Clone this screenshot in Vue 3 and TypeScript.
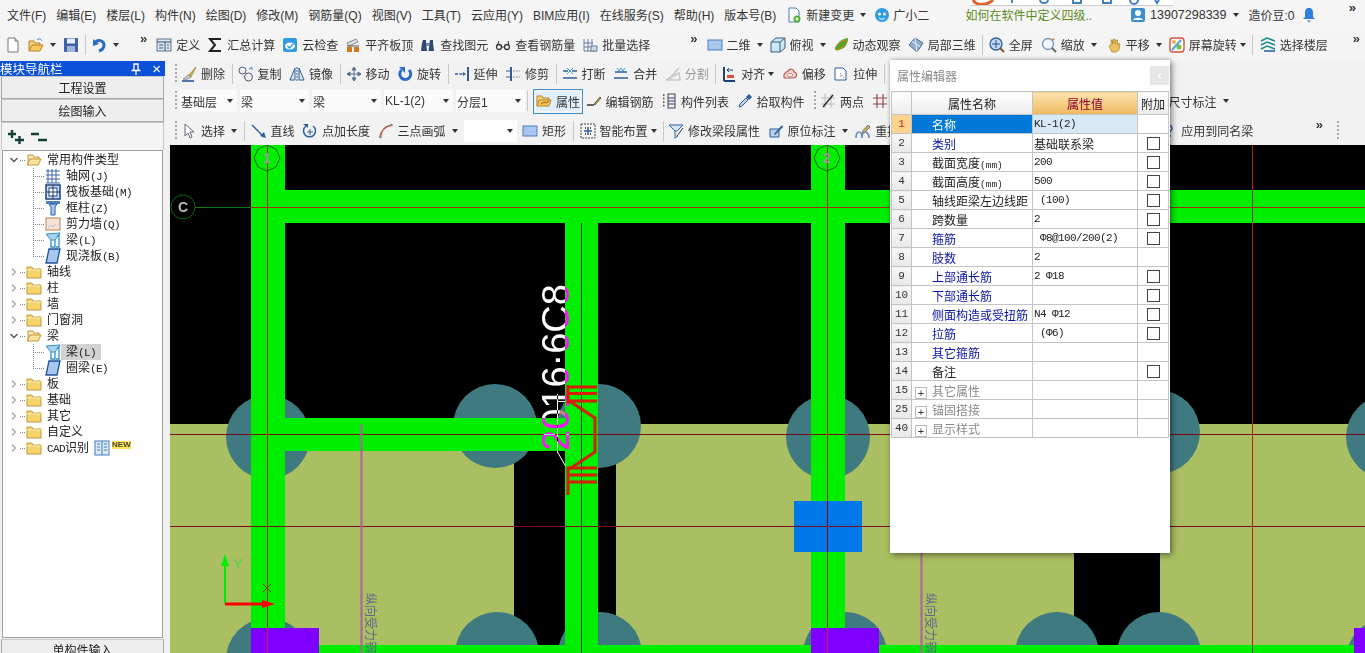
<template>
  <div class="app">
    <header class="menubar">
      <span v-for="m in menus" :key="m" class="menu">{{ m }}</span>
      <span class="menu-tool">
        <svg class="ico" viewBox="0 0 16 16" v-html="icons.change"></svg>新建变更<i class="caret"></i>
      </span>
      <span class="menu-tool robot">
        <svg class="ico" viewBox="0 0 16 16" v-html="icons.robot"></svg>广小二
      </span>
      <span class="tip">如何在软件中定义四级..</span>
      <span class="menu-tool account">
        <svg class="ico" viewBox="0 0 16 16" v-html="icons.user"></svg>13907298339<i class="caret"></i>
      </span>
      <span class="beans">造价豆:0</span>
      <svg class="ico bell" viewBox="0 0 16 16" v-html="icons.bell"></svg>
      <span class="more more-menu">»</span>
      <div class="popup">
        <svg width="203" height="6" viewBox="0 0 203 6">
          <path d="M3 0c3 6 14 6 20 0" fill="none" stroke="#e2602a" stroke-width="3" />
          <path d="M42 0v3M70 0a4 3 0 0 0 8 0M103 0v3h8V0M133 0v3h8V0M160 0a4 4 0 0 0 8 0M185 0l2 3 2-3" fill="none" stroke="#3f7fc0" stroke-width="2" />
        </svg>
      </div>
    </header>

    <aside class="nav">
      <div class="nav-title">
        <span>模块导航栏</span>
        <svg class="pin" viewBox="0 0 10 12"><path d="M3 1h4v5l1.500 1.500h-7L3 6zM5 8v4" fill="none" stroke="#fff" stroke-width="1.300" /></svg>
        <span class="nav-close">×</span>
      </div>
      <button class="nav-btn">工程设置</button>
      <button class="nav-btn">绘图输入</button>
      <div class="nav-tools">
        <svg class="tree-tool" viewBox="0 0 16 14"><path d="M0 4h8M4 0v8M7 10h9M11.500 6v8" stroke="#14403a" stroke-width="2.400" fill="none" /></svg>
        <svg class="tree-tool" viewBox="0 0 16 14"><path d="M0 4h8M7 10h9" stroke="#14403a" stroke-width="2.400" fill="none" /></svg>
      </div>
      <div class="tree">
        <div v-for="(n, i) in tree" :key="i" class="tree-row" :class="n.child ? 'tree-child' : 'tree-top'">
          <template v-if="n.child">
            <span class="stem" :class="{ last: n.last }"></span>
          </template>
          <template v-else>
            <svg class="chev" viewBox="0 0 8 8">
              <path :d="n.open ? 'M0.500 2l3.500 3.500L7.500 2' : 'M2 0.500l3.500 3.500L2 7.500'" fill="none" :stroke="n.open ? '#555' : '#aaa'" stroke-width="1.400" />
            </svg>
            <span class="link"></span>
          </template>
          <svg class="ico" viewBox="0 0 16 16" v-html="icons[n.icon]"></svg>
          <span class="tree-label" :class="{ picked: n.picked }"><span v-if="n.pre" class="mono">{{ n.pre }}</span>{{ n.label }}<span v-if="n.key" class="mono">{{ n.key }}</span></span>
          <template v-if="n.cad">
            <svg class="ico cad-ico" viewBox="0 0 16 16" v-html="icons.cad"></svg>
            <span class="new-tag">NEW</span>
          </template>
        </div>
      </div>
      <button class="nav-btn nav-single">单构件输入</button>
    </aside>

    <div v-for="row in toolRows" :key="row.cls" class="toolrow" :class="row.cls">
      <template v-for="(t, i) in row.items" :key="i">
        <i v-if="t.grip" class="grip"></i>
        <i v-else-if="t.sep" class="sep"></i>
        <span v-else-if="t.more" class="more" :style="t.ml ? { marginLeft: t.ml + 'px' } : undefined">»</span>
        <span v-else-if="t.combo !== undefined" class="combo" :class="{ narrow: t.narrow, blank: t.blank }">
          {{ t.combo }}<i class="caret"></i>
        </span>
        <span v-else class="tool" :class="{ active: t.active, off: t.off, push: t.push, tight: t.tight }" :style="t.ml ? { marginLeft: t.ml + 'px' } : undefined">
          <svg v-if="t.icon" class="ico" viewBox="0 0 16 16" v-html="icons[t.icon]"></svg>
          <span v-if="t.label">{{ t.label }}</span>
          <i v-if="t.arrow" class="caret"></i>
        </span>
      </template>
    </div>

    <svg class="canvas" viewBox="170 145 1195 508" width="1195" height="508">
      <rect x="170" y="145" width="1195" height="508" fill="#000" />
      <rect x="170" y="424" width="1195" height="229" fill="#a9bf62" />
      <rect x="514" y="424" width="102" height="229" fill="#000" />
      <rect x="1074" y="424" width="86" height="229" fill="#000" />

      <circle v-for="c in piles" :key="c[0] + '-' + c[1]" :cx="c[0]" :cy="c[1]" r="42" fill="#3f7a80" />

      <g fill="#00ee00">
        <rect x="251" y="145" width="34" height="508" />
        <rect x="565" y="223" width="33" height="430" />
        <rect x="811" y="145" width="34" height="508" />
        <rect x="251" y="190" width="1114" height="33" />
        <rect x="285" y="418" width="280" height="33" />
        <rect x="251" y="645" width="1114" height="8" />
      </g>

      <g stroke-width="1" fill="none">
        <path d="M195 207.500h56" stroke="#0b7a0b" />
        <path d="M251 207.500h1114" stroke="#a82c08" />
        <path d="M267.500 145v483M827.500 145v508M1252.500 145v508" stroke="#a82c08" />
        <path d="M581.500 223v430" stroke="#0a2a0a" />
        <path d="M170 434.500h1195M170 526.500h1195" stroke="#7d0a14" />
        <path d="M361.500 424v229M921.500 424v229" stroke="#b060a0" stroke-width="2" />
        <circle cx="183" cy="207" r="12" stroke="#0a6a0a" />
        <path d="M280 158l-4 9-9 4-9-4-4-9 4-9 9-4 9 4z" stroke="#0b6a0b" />
        <path d="M840 158l-4 9-9 4-9-4-4-9 4-9 9-4 9 4z" stroke="#0b6a0b" />
      </g>
      <text x="183" y="212" class="bubble">C</text>
      <text x="267" y="163" class="bubble dim">1</text>
      <text x="827" y="163" class="bubble dim">2</text>

      <rect x="794" y="501" width="68" height="51" fill="#0078e8" />
      <path d="M827.500 501v51M794 526.500h68" stroke="#7d0a14" />
      <g fill="#7f00ff">
        <rect x="251" y="628" width="68" height="25" />
        <rect x="811" y="628" width="68" height="25" />
        <rect x="1354" y="628" width="11" height="25" />
      </g>
      <path d="M267.500 628v25M827.500 628v25" stroke="#e0104a" />

      <text class="longbar" transform="translate(366 593) rotate(90)">纵向受力钢</text>
      <text class="longbar" transform="translate(926 593) rotate(90)">纵向受力钢</text>

      <path d="M557.500 394v58l8 14" stroke="#fff" fill="none" />
      <path d="M557 401.500h8" stroke="#fff" />
      <text class="stamp" transform="translate(569 451) rotate(-90)">2016·6C8</text>

      <g fill="none" stroke="#d81e06" stroke-width="3">
        <path d="M568 385v17l3 0 24 16v34l-24 16h-3v27" />
        <path d="M568 387h29M568 393.500h29M568 401h29M568 468h29M568 475h29M568 482h29" />
      </g>

      <path d="M225 604v-40" stroke="#00ee00" stroke-width="2" />
      <path d="M225 554l-4 12h8z" fill="#00ee00" />
      <text x="233" y="569" class="axis-y">Y</text>
      <path d="M225 604h42" stroke="#f00" stroke-width="3" />
      <path d="M275 604l-13-4v8z" fill="#f00" />
      <path d="M263 584l8 8M271 584l-8 8" stroke="#8a3a00" />
    </svg>

    <div class="props">
      <div class="props-title">
        <span>属性编辑器</span>
        <span class="props-close">‹</span>
      </div>
      <table class="grid">
        <colgroup>
          <col class="c-no" /><col class="c-name" /><col class="c-val" /><col class="c-add" />
        </colgroup>
        <thead>
          <tr>
            <th class="idx"></th>
            <th>属性名称</th>
            <th class="th-val">属性值</th>
            <th>附加</th>
          </tr>
        </thead>
        <tbody>
          <tr v-for="(r, i) in props" :key="r.no">
            <td class="idx" :class="{ sel: i === 0 }">{{ r.no }}</td>
            <td class="name" :class="[r.kind, { sel: i === 0 }]">
              <span v-if="r.kind === 'group'" class="plus">+</span>{{ r.name }}<span v-if="r.unit" class="unit">{{ r.unit }}</span>
            </td>
            <td class="val" :class="{ sel: i === 0, cn: r.cn }">{{ r.val }}</td>
            <td class="add"><i v-if="r.check" class="check"></i></td>
          </tr>
        </tbody>
      </table>
    </div>
  </div>
</template>

<script setup lang="ts">
interface Tool {
  icon?: string
  label?: string
  arrow?: boolean
  tight?: boolean
  sep?: boolean
  grip?: boolean
  more?: boolean
  combo?: string
  narrow?: boolean
  blank?: boolean
  active?: boolean
  off?: boolean
  push?: boolean
  ml?: number
}

interface TreeNode {
  label: string
  icon: string
  key?: string
  pre?: string
  open?: boolean
  child?: boolean
  last?: boolean
  picked?: boolean
  cad?: boolean
}

interface PropRow {
  no: number
  name: string
  val: string
  kind: string
  unit?: string
  check?: boolean
  cn?: boolean
}

const menus = ['文件(F)', '编辑(E)', '楼层(L)', '构件(N)', '绘图(D)', '修改(M)', '钢筋量(Q)', '视图(V)', '工具(T)', '云应用(Y)', 'BIM应用(I)', '在线服务(S)', '帮助(H)', '版本号(B)']

const toolRows: { cls: string; items: Tool[] }[] = [
  {
    cls: 'row-top',
    items: [
      { icon: 'doc' }, { icon: 'open', arrow: true }, { icon: 'save' }, { sep: true }, { icon: 'undo', arrow: true },
      { more: true, ml: 14 },
      { icon: 'define', label: '定义', ml: 9 }, { icon: 'sigma', label: '汇总计算' }, { icon: 'cloud', label: '云检查' },
      { icon: 'level', label: '平齐板顶' }, { icon: 'binoc', label: '查找图元' }, { icon: 'glasses', label: '查看钢筋量' },
      { icon: 'batch', label: '批量选择' }, { more: true, ml: 33 },
      { icon: 'plane', label: '二维', arrow: true, ml: 9 }, { icon: 'cube', label: '俯视', arrow: true },
      { icon: 'orbit', label: '动态观察' }, { icon: 'local3d', label: '局部三维' }, { sep: true },
      { icon: 'full', label: '全屏', ml: 1 }, { icon: 'zoom', label: '缩放', arrow: true, ml: 1 }, { icon: 'hand', label: '平移', arrow: true, ml: 2 },
      { icon: 'spin', label: '屏幕旋转', arrow: true, tight: true }, { sep: true }, { icon: 'floors', label: '选择楼层', ml: 2 },
      { more: true, ml: 18 },
    ],
  },
  {
    cls: 'row-edit',
    items: [
      { grip: true }, { icon: 'brush', label: '删除' }, { sep: true }, { icon: 'copy', label: '复制' }, { icon: 'mirror', label: '镜像' }, { sep: true },
      { icon: 'move', label: '移动' }, { icon: 'turn', label: '旋转' }, { sep: true }, { icon: 'extend', label: '延伸' }, { icon: 'trim', label: '修剪' }, { sep: true },
      { icon: 'cut', label: '打断' }, { icon: 'join', label: '合并' }, { icon: 'split', label: '分割', off: true }, { sep: true },
      { icon: 'align', label: '对齐', arrow: true, tight: true }, { icon: 'offset', label: '偏移' }, { icon: 'stretch', label: '拉伸' }, { sep: true },
    ],
  },
  {
    cls: 'row-prop',
    items: [
      { grip: true }, { combo: '基础层', narrow: true }, { combo: '梁' }, { combo: '梁' }, { combo: 'KL-1(2)' }, { combo: '分层1' }, { sep: true },
      { icon: 'prop', label: '属性', active: true }, { icon: 'rebar', label: '编辑钢筋' }, { icon: 'list', label: '构件列表' }, { icon: 'pick', label: '拾取构件' },
      { grip: true }, { icon: 'twopt', label: '两点' }, { icon: 'para' },
      { label: '尺寸标注', arrow: true, push: true },
    ],
  },
  {
    cls: 'row-draw',
    items: [
      { grip: true }, { icon: 'cursor', label: '选择', arrow: true }, { sep: true }, { icon: 'line', label: '直线' }, { icon: 'ptlen', label: '点加长度' },
      { icon: 'arc', label: '三点画弧', arrow: true }, { combo: '', blank: true }, { icon: 'plane', label: '矩形' }, { sep: true },
      { icon: 'smart', label: '智能布置', arrow: true, tight: true }, { sep: true }, { icon: 'funnel', label: '修改梁段属性' }, { icon: 'origin', label: '原位标注', arrow: true },
      { icon: 'lift', label: '重提' },
      { icon: 'apply', label: '应用到同名梁', push: true }, { more: true, ml: 55 }, { grip: true },
    ],
  },
]

const tree: TreeNode[] = [
  { label: '常用构件类型', icon: 'fopen', open: true },
  { label: '轴网', key: '(J)', icon: 'tgrid', child: true },
  { label: '筏板基础', key: '(M)', icon: 'traft', child: true },
  { label: '框柱', key: '(Z)', icon: 'tcol', child: true },
  { label: '剪力墙', key: '(Q)', icon: 'twall', child: true },
  { label: '梁', key: '(L)', icon: 'funnel2', child: true },
  { label: '现浇板', key: '(B)', icon: 'tslab', child: true, last: true },
  { label: '轴线', icon: 'folder' },
  { label: '柱', icon: 'folder' },
  { label: '墙', icon: 'folder' },
  { label: '门窗洞', icon: 'folder' },
  { label: '梁', icon: 'fopen', open: true },
  { label: '梁', key: '(L)', icon: 'funnel2', child: true, picked: true },
  { label: '圈梁', key: '(E)', icon: 'tslab', child: true, last: true },
  { label: '板', icon: 'folder' },
  { label: '基础', icon: 'folder' },
  { label: '其它', icon: 'folder' },
  { label: '自定义', icon: 'folder' },
  { label: '识别', pre: 'CAD', icon: 'folder', cad: true },
]

const props: PropRow[] = [
  { no: 1, name: '名称', val: 'KL-1(2)', kind: 'blue' },
  { no: 2, name: '类别', val: '基础联系梁', kind: 'blue', check: true, cn: true },
  { no: 3, name: '截面宽度', unit: '(mm)', val: '200', kind: 'plain', check: true },
  { no: 4, name: '截面高度', unit: '(mm)', val: '500', kind: 'plain', check: true },
  { no: 5, name: '轴线距梁左边线距', val: ' (100)', kind: 'plain', check: true },
  { no: 6, name: '跨数量', val: '2', kind: 'plain', check: true },
  { no: 7, name: '箍筋', val: ' Φ8@100/200(2)', kind: 'blue', check: true },
  { no: 8, name: '肢数', val: '2', kind: 'blue' },
  { no: 9, name: '上部通长筋', val: '2 Φ18', kind: 'blue', check: true },
  { no: 10, name: '下部通长筋', val: '', kind: 'blue', check: true },
  { no: 11, name: '侧面构造或受扭筋', val: 'N4 Φ12', kind: 'blue', check: true },
  { no: 12, name: '拉筋', val: ' (Φ6)', kind: 'blue', check: true },
  { no: 13, name: '其它箍筋', val: '', kind: 'blue' },
  { no: 14, name: '备注', val: '', kind: 'plain', check: true },
  { no: 15, name: '其它属性', val: '', kind: 'group' },
  { no: 25, name: '锚固搭接', val: '', kind: 'group' },
  { no: 40, name: '显示样式', val: '', kind: 'group' },
]

const piles = [
  [268, 437], [495, 426], [599, 426], [828, 437], [1158, 432], [1388, 437],
  [268, 660], [497, 654], [600, 654], [845, 654], [1057, 654], [1159, 654], [1388, 660],
]

const icons: Record<string, string> = {
  change: '<path d="M3 1h7l3 3v11H3z" fill="#fff" stroke="#4a7fb5"/><circle cx="11" cy="12" r="3.500" fill="#4fae2e"/><path d="M9 12h4M11 10v4" stroke="#fff"/>',
  robot: '<circle cx="8" cy="8" r="7" fill="#2f9be0"/><circle cx="5.500" cy="7" r="1.500" fill="#fff"/><circle cx="10.500" cy="7" r="1.500" fill="#fff"/><path d="M5 11c2 1.500 4 1.500 6 0" stroke="#fff" fill="none"/>',
  user: '<rect x="1" y="1" width="14" height="14" rx="2" fill="#3d8fd0"/><circle cx="8" cy="6" r="3" fill="#fff"/><path d="M3 13c1-3 9-3 10 0z" fill="#fff"/>',
  bell: '<path d="M8 1c3 0 4 2 4 5v4l2 2H2l2-2V6c0-3 1-5 4-5z" fill="#2f7fe0"/><path d="M6 13.500h4l-2 2z" fill="#2f7fe0"/>',
  doc: '<path d="M3 1h7l3 3v11H3z" fill="#fff" stroke="#777"/><path d="M10 1v3h3" fill="#ddd" stroke="#777"/>',
  open: '<path d="M1 14V4h5l1 2h5v2" fill="#f4d27a" stroke="#b8862a"/><path d="M1 14l3-6h11l-3 6z" fill="#f7c75a" stroke="#b8862a"/><path d="M9 3c2-2 4-1 5 1" fill="none" stroke="#3a7ab8"/>',
  save: '<rect x="1" y="1" width="14" height="14" rx="1" fill="#3d62a8"/><rect x="4" y="1.500" width="8" height="5" fill="#e8eef8"/><rect x="4" y="9" width="8" height="6" fill="#9db4d8"/>',
  undo: '<path d="M4 6c2-4 9-3 9 2 0 3-2 5-5 6" fill="none" stroke="#2b6cc4" stroke-width="3"/><path d="M2 2l0 7 6-2z" fill="#2b6cc4"/>',
  define: '<rect x="1" y="2" width="14" height="12" fill="#dfe8f2" stroke="#5a7390"/><path d="M1 5h14M9 5v9M3 8h4M3 11h4M11 8h2M11 11h2" stroke="#33506e"/>',
  sigma: '<path d="M13 3V2H3l5 6-5 6h10v-1" fill="none" stroke="#222" stroke-width="2"/>',
  cloud: '<rect x="1" y="1" width="14" height="14" rx="2" fill="#2f9be0"/><ellipse cx="8" cy="9" rx="5" ry="3.500" fill="#fff"/><path d="M5.500 9l2 2 3.500-4" fill="none" stroke="#2f9be0" stroke-width="1.500"/>',
  level: '<path d="M2 6l9-4 2 3-9 4z" fill="#ddd" stroke="#888"/><rect x="2" y="10" width="5" height="5" fill="#d2791e"/><rect x="9" y="10" width="5" height="5" fill="#d2791e"/><path d="M2 9h12" stroke="#555"/>',
  binoc: '<path d="M3 3h3v3l1 8H1l1-8zM10 3h3v3l1 8H8.500l1-8z" fill="#2e4a70"/><rect x="6" y="6" width="4" height="3" fill="#6d85a6"/>',
  glasses: '<circle cx="4" cy="10" r="2.500" fill="none" stroke="#333" stroke-width="1.300"/><circle cx="12" cy="10" r="2.500" fill="none" stroke="#333" stroke-width="1.300"/><path d="M6.500 10h3M2 9l2-5M14 9l-1-5" stroke="#333" fill="none"/>',
  batch: '<path d="M2 2v12h12M2 6h9M2 10h9M6 2v12M10 2v12" fill="none" stroke="#6b7f9c"/><rect x="9" y="9" width="6" height="5" fill="#c9d8ea" stroke="#6b7f9c"/>',
  plane: '<rect x="1" y="3" width="14" height="10" fill="#a8c6ee" stroke="#4f7fbf"/>',
  cube: '<path d="M1 5l5-4h9v10l-5 4H1z" fill="#cfe6f5" stroke="#3a5e80"/><path d="M1 5h9v10M10 5l5-4" fill="none" stroke="#3a5e80"/>',
  orbit: '<path d="M2 13C3 6 8 2 15 1c0 7-4 12-11 12z" fill="#4ea72c"/><ellipse cx="8" cy="8" rx="7" ry="2.500" transform="rotate(-40 8 8)" fill="none" stroke="#c9851e"/>',
  local3d: '<path d="M1 8l6-7 8 5-6 9z" fill="#8eaed0" stroke="#4a6a8c"/><path d="M4 4.500l8 5M7 1l2 14" stroke="#e6eef6" fill="none"/>',
  full: '<circle cx="7" cy="7" r="6" fill="#c5d9f0" stroke="#2f5f9a" stroke-width="1.300"/><path d="M7 3v8M3 7h8" stroke="#1c4f90"/><path d="M11 11l4 4" stroke="#7a5a2a" stroke-width="2"/>',
  zoom: '<circle cx="7" cy="7" r="5.500" fill="#eef5fc" stroke="#7790ad" stroke-width="1.300"/><path d="M11 11l4 4" stroke="#666" stroke-width="2"/><path d="M12 1v3M10.500 2.500h3" stroke="#d28a1c"/>',
  hand: '<path d="M3 9l2-1V3h1.500v4l1-5H9v5l1-4h1.500v5l1.500-2 1 1-1 6-3 2H6z" fill="#e8c261" stroke="#a07a20" stroke-width=".6"/>',
  spin: '<rect x="1" y="1" width="14" height="14" rx="3" fill="#fff" stroke="#d8503a" stroke-width="1.400"/><path d="M3 13L12 3" stroke="#5aa8d8" stroke-width="2.500"/><circle cx="10" cy="10" r="2.500" fill="#7bbf3e"/><circle cx="5" cy="5" r="2" fill="#f0b040"/>',
  floors: '<path d="M1 4l6-3 8 3M1 8l6-3 8 3M1 12l6-3 8 3" fill="none" stroke="#1f8a8a" stroke-width="1.600"/><path d="M4 14h11" stroke="#2d5fa8" stroke-width="1.600"/>',
  brush: '<path d="M15 1L8 9l2 2z" fill="#d8b040" stroke="#8a6a20" stroke-width=".6"/><path d="M8 9c-3 0-3 3-6 4 3 1 6 0 8-2z" fill="#c8c8c8" stroke="#666" stroke-width=".6"/><path d="M1 15h12" stroke="#1c4f90" stroke-width="1.500"/>',
  copy: '<circle cx="4.500" cy="4.500" r="3.500" fill="none" stroke="#557"/><circle cx="10.500" cy="11" r="4" fill="none" stroke="#557"/><path d="M11 3l3-2M13 3h2" stroke="#2f7fc0"/>',
  mirror: '<path d="M1 14L6 2v12zM15 14L10 2v12z" fill="#dde6f0" stroke="#2f5f9a"/><path d="M8 1v14" stroke="#2f5f9a" stroke-dasharray="2 1"/>',
  move: '<path d="M8 1v14M1 8h14M8 1L6 4h4zM8 15l-2-3h4zM1 8l3-2v4zM15 8l-3-2v4z" fill="#5a7390" stroke="#5a7390"/>',
  turn: '<path d="M12 4a5.500 5.500 0 1 1-7.500 0" fill="none" stroke="#2b6cc4" stroke-width="3"/><path d="M2 1h6v6z" fill="#2b6cc4"/>',
  extend: '<path d="M1 8h8M12 8h0" stroke="#2f5f9a" stroke-width="1.500" stroke-dasharray="3 1.500"/><path d="M14 1v14" stroke="#2f5f9a" stroke-width="2"/><path d="M9 6v4l3-2z" fill="#2f5f9a"/>',
  trim: '<path d="M6 1v14" stroke="#2f5f9a" stroke-width="2"/><path d="M1 5h4M1 11h4" stroke="#2f5f9a"/><path d="M8 5h7M8 11h7" stroke="#88a" stroke-dasharray="2 1"/>',
  cut: '<path d="M1 5h5M10 5h5M1 12h14" stroke="#2f5f9a" stroke-width="1.500"/><path d="M5 2l3 3-3 3M11 2L8 5l3 3" fill="none" stroke="#3f9fd0"/>',
  join: '<path d="M2 6h12M1 12h14" stroke="#2f5f9a" stroke-width="1.500"/><path d="M4 2l2 3 2-3M8 2l2 3 2-3" fill="none" stroke="#3f9fd0"/>',
  split: '<path d="M1 14h14L14 7z" fill="none" stroke="#c8c8c8" stroke-width="1.500"/><path d="M4 13L14 2" stroke="#c8c8c8" stroke-width="1.500"/>',
  align: '<path d="M3 1v14M3 15h11" stroke="#1f3f7a" stroke-width="2"/><rect x="6" y="9" width="7" height="3" fill="#d8503a"/><path d="M6 4h6M6 4l2-2M6 4l2 2" stroke="#1f3f7a" fill="none"/>',
  offset: '<path d="M2 11c-1-4 3-5 4-6 2-3 6-2 6 1 3 0 4 6-1 6H4c-1 0-2 0-2-1z" fill="#f4d8d0" stroke="#b06050" stroke-width="1.200"/><ellipse cx="8" cy="9" rx="3" ry="1.500" fill="#fff" stroke="#b06050" stroke-width=".7"/>',
  stretch: '<path d="M2 2h8l3 3v9H2z" fill="#fff" stroke="#2f5f9a"/><path d="M7 7l4 5M7 10h2" stroke="#888" stroke-dasharray="1.500 1"/>',
  prop: '<path d="M1 13V3h5l1 2h6v2" fill="#f4d27a" stroke="#b8862a"/><path d="M1 13l2-6h12l-2 6z" fill="#f7c75a" stroke="#b8862a"/><path d="M5 11l3-2 2 1 3-2" stroke="#a04a10" fill="none"/>',
  rebar: '<path d="M1 12h7" stroke="#333" stroke-width="1.500"/><path d="M8 11l6-7 1 1-6 7z" fill="#c8a040" stroke="#665"/>',
  list: '<path d="M2 2h2M2 5.500h2M2 9h2M2 12.500h2" stroke="#444" stroke-width="1.500" stroke-dasharray="1.500 .7"/><rect x="7" y="1" width="7" height="14" fill="#e6edf5" stroke="#445"/><path d="M7 5h7M7 8h7M7 11h7" stroke="#445"/>',
  pick: '<path d="M2 14l1-3 6-6 2 2-6 6z" fill="#bcd8f0" stroke="#2f5f9a"/><path d="M9 4l3-3 3 3-3 3z" fill="#2f5f9a"/>',
  twopt: '<path d="M1 5h14M1 11h14M5 1v14M11 1v14" stroke="#b8b8b8"/><path d="M3 14L13 2" stroke="#222" stroke-width="1.300"/>',
  para: '<path d="M1 5h14M1 11h14M5 1v14M11 1v14" stroke="#9a4848" stroke-width="1.200"/>',
  cursor: '<path d="M4 1v12l3-3 2 5 2-1-2-5h4z" fill="#fff" stroke="#667"/>',
  line: '<path d="M1 2l12 12" stroke="#2f5f9a" stroke-width="1.500"/><path d="M15 15l-6-2 4-4z" fill="#2f5f9a"/>',
  ptlen: '<path d="M11 3a6 6 0 1 1-7 0" fill="none" stroke="#2f5f9a" stroke-width="1.500"/><path d="M1 1h5v4z" fill="#2f5f9a"/><path d="M8 6v6M5 9h6" stroke="#2f5f9a"/>',
  arc: '<path d="M2 15C3 7 7 3 14 2" fill="none" stroke="#b84a30" stroke-width="1.500"/><circle cx="2.500" cy="14" r="1.200" fill="#888"/><circle cx="13.500" cy="2" r="1.200" fill="#888"/>',
  smart: '<rect x="1" y="1" width="14" height="14" fill="#f4f4f4" stroke="#444" stroke-dasharray="2 1"/><path d="M8 4v8M4 8h8" stroke="#2f5f9a" stroke-width="1.500"/><path d="M5 5h1M10 5h1M5 11h1M10 11h1" stroke="#222" stroke-width="1.500"/>',
  funnel: '<path d="M1 2h14l-6 6H7z" fill="#d6e6f5" stroke="#2f5f9a"/><path d="M7 8v7l3-2" fill="none" stroke="#2f5f9a"/><path d="M9 13l6-8" stroke="#333"/>',
  origin: '<path d="M2 14V6h9v8z" fill="#b8d0ec" stroke="#2f5f9a"/><path d="M6 11l8-9 1 2-8 8z" fill="#2f5f9a"/>',
  lift: '<path d="M1 15c0-5 2-6 3-6s3 1 3 6M7 15c0-5 2-6 3-6s4 1 4 6" fill="none" stroke="#5a88c0" stroke-width="1.500"/><path d="M7 9l6-7 2 2-6 6z" fill="#d0b060" stroke="#776"/>',
  apply: '<path d="M5 5a3 3 0 1 1 4 3v2M9 12v2" fill="none" stroke="#2f5f9a" stroke-width="1.300"/>',
  folder: '<path d="M1 14V3h5l1 2h8v9z" fill="#f6d36c" stroke="#c09a3a"/><path d="M1 6h14" stroke="#fbe9ae"/>',
  fopen: '<path d="M2 13V3h5l1 2h5v2" fill="#f8e6ae" stroke="#c09a3a"/><path d="M1 13l3-6h11l-3 6z" fill="#f8e2a0" stroke="#c09a3a"/>',
  tgrid: '<path d="M1 3h14M1 7h14M1 11h14M1 15h14M3 1v14M7 1v14M11 1v14" stroke="#3f63a8"/>',
  traft: '<rect x="1" y="1" width="14" height="14" fill="#cfe0f2" stroke="#1f3f7a" stroke-width="1.500"/><rect x="4" y="4" width="8" height="8" fill="#fff" stroke="#1f3f7a"/><path d="M8 1v14M1 8h14" stroke="#1f3f7a"/>',
  tcol: '<path d="M1 1h14v3H1z" fill="#4f7fbf"/><path d="M4 4h8l-2 3v8H6V7z" fill="#a8c6ee" stroke="#2f5f9a"/>',
  twall: '<rect x="1" y="2" width="14" height="12" fill="#f4e4d8" stroke="#c08050"/><path d="M3 12l3-3 2 2 3-4" stroke="#8aa0c0" stroke-dasharray="1 1" fill="none"/>',
  funnel2: '<path d="M1 2l14-1-5 7H6z" fill="#a8d4f0" stroke="#2f8fc8"/><path d="M6 8v7h4V8M12 5l2-2v12h-3" fill="none" stroke="#2f8fc8" stroke-width="1.300"/>',
  tslab: '<path d="M4 1h11l-3 14H1z" fill="#a8c6ee" stroke="#1f4f9a" stroke-width="1.300"/>',
  cad: '<rect x="1" y="1" width="14" height="14" fill="#dbe8f6" stroke="#3f7fc0"/><path d="M8 1v14M3 4h3M3 7h3M3 10h3M10 4h3M10 7h3M10 10h3" stroke="#3f7fc0"/>',
}
</script>

<style>
html, body { background: #f0f0f0; }
</style>

<style scoped>
.app {
  position: relative;
  width: 1365px;
  height: 653px;
  overflow: hidden;
  display: grid;
  grid-template-columns: 165px 1fr;
  grid-template-rows: 31px 29px 28px 28px 29px 1fr;
  background: #f0f0f0;
  color: #333;
  font: 12px "Liberation Sans", "Noto Sans CJK SC", sans-serif;
}

.ico { width: 16px; height: 16px; flex: none; }

.caret {
  display: inline-block;
  width: 0;
  height: 0;
  margin-left: 2px;
  border: 3px solid transparent;
  border-top: 4px solid #333;
  border-bottom: 0;
  flex: none;
}
.tight .caret { margin-left: -1px; }
.combo .caret { margin-left: 0; }

.menubar {
  grid-column: 1 / -1;
  position: relative;
  display: flex;
  align-items: center;
  gap: 10px;
  padding: 0 0 2px 7px;
  background: #f5f5f5;
}
.menu { white-space: nowrap; }
.menu-tool { display: flex; align-items: center; gap: 4px; white-space: nowrap; }
.robot { margin-left: -2px; gap: 3px; }
.tip { margin-left: 26px; color: #5b8a1a; white-space: nowrap; }
.account { margin-left: 28px; gap: 4px; font-size: 12.500px; }
.beans { white-space: nowrap; }
.bell { margin-left: -4px; }
.more { font-size: 13px; font-weight: 700; line-height: 1; align-self: flex-start; margin-top: 1px; flex: none; }
.more-menu { margin-left: auto; margin-right: 9px; }

.popup {
  position: absolute;
  left: 970px;
  top: 0;
  width: 203px;
  height: 5px;
  overflow: hidden;
  background: #fff;
  border-bottom: 1px solid #ccc;
}
.popup svg { display: block; }

.toolrow {
  display: flex;
  align-items: center;
  white-space: nowrap;
  overflow: hidden;
  min-width: 0;
  background: #f2f2f2;
}
.row-top { grid-column: 1 / -1; padding: 0 0 2px 5px; background: #f4f4f4; }
.row-edit, .row-prop, .row-draw { grid-column: 2; padding-left: 10px; }
.row-edit { padding-bottom: 1px; }
.row-prop { padding-right: 129px; padding-bottom: 2px; }
.row-draw { padding-right: 22px; }
.row-draw .more { margin-right: 14px; margin-top: 2px; }

.tool { display: flex; align-items: center; gap: 4px; margin-right: 7.500px; flex: none; }
.row-top .tool { margin-right: 7px; }
.tool.active {
  padding: 1px 0;
  margin-left: 3px;
  margin-right: 5.500px;
  background: #deeefb;
  outline: 1px solid #3d8fd0;
  outline-offset: 2px;
}
.tool.off { color: #999; }
.tool.push { margin-left: auto; }

.grip {
  width: 2px;
  height: 20px;
  margin-right: 4px;
  flex: none;
  background: repeating-linear-gradient(to bottom, #aaa 0 2px, transparent 2px 4px);
}
.tool + .grip { margin-left: 2px; }
.sep { width: 1px; height: 20px; margin: 0 5px 0 -1px; background: #c8c8c8; flex: none; }
.row-draw .sep { margin-right: 6px; }
.row-draw .tight + .sep { margin-right: 4px; }

.combo {
  display: flex;
  align-items: center;
  justify-content: space-between;
  box-sizing: border-box;
  width: 69px;
  height: 22px;
  margin-right: 3px;
  padding: 0 4px 0 1px;
  background: #fbfbfb;
  flex: none;
}
.grip + .combo { margin-left: -1px; }
.combo.narrow { width: 57px; }
.combo.blank { width: 53px; margin: 0 5px 0 -1px; background: #fff; justify-content: flex-end; }

.nav {
  grid-column: 1;
  grid-row: 3 / 7;
  display: flex;
  flex-direction: column;
  min-height: 0;
  overflow: hidden;
  padding-top: 1px;
}
.nav-title {
  display: flex;
  align-items: center;
  flex: none;
  height: 15px;
  background: #0c52d8;
  color: #fff;
  font-size: 12.500px;
}
.pin { width: 10px; height: 12px; margin-left: auto; }
.nav-close { margin: 0 4px 0 11px; font-size: 15px; line-height: 1; }
.nav-btn {
  flex: none;
  height: 23px;
  margin: 0 1px;
  padding: 0;
  border: 1px solid #a8a8a8;
  border-top-color: #c8c8c8;
  background: #eeeeee;
  color: #222;
  font: inherit;
  text-align: center;
}
.nav-tools {
  display: flex;
  align-items: center;
  gap: 7px;
  flex: none;
  height: 27px;
  margin: 0 1px;
  padding-left: 6px;
  border: 1px solid #c8c8c8;
  border-bottom: 0;
  background: #f4f4f4;
}
.tree-tool { width: 16px; height: 14px; }
.tree {
  flex: none;
  box-sizing: border-box;
  height: 488px;
  margin: 0 2px 1px;
  padding-top: 1px;
  background: #fff;
  border: 1px solid #a0a0a0;
}
.nav-single { height: 20px; }

.tree-row { display: flex; align-items: center; height: 16px; white-space: nowrap; color: #222; }
.tree-top { padding-left: 7px; }
.tree-child { padding-left: 30px; }
.chev { width: 8px; height: 8px; flex: none; }
.link {
  width: 6px;
  height: 1px;
  margin: 0 0 0 2px;
  flex: none;
  background: repeating-linear-gradient(to right, #888 0 1px, transparent 1px 2px);
}
.tree-top .ico { margin-right: 5px; }
.tree-child .ico { margin-right: 5px; }
.stem {
  align-self: stretch;
  width: 12px;
  flex: none;
  background:
    repeating-linear-gradient(to bottom, #888 0 1px, transparent 1px 2px) left top / 1px 100% no-repeat,
    repeating-linear-gradient(to right, #888 0 1px, transparent 1px 2px) left 8px / 100% 1px no-repeat;
}
.stem.last {
  background:
    repeating-linear-gradient(to bottom, #888 0 1px, transparent 1px 2px) left top / 1px 9px no-repeat,
    repeating-linear-gradient(to right, #888 0 1px, transparent 1px 2px) left 8px / 100% 1px no-repeat;
}
.tree-label { line-height: 16px; }
.tree-label.picked { background: #d2d2d2; margin-left: -5px; padding: 0 5px; }
.mono { font: 11px "Liberation Mono", monospace; letter-spacing: -0.600px; }
.tree-top .cad-ico, .cad-ico { margin-left: 5px; margin-right: 2px; }
.new-tag {
  align-self: flex-start;
  background: #ffe44d;
  color: #444;
  font-size: 8px;
  font-weight: 700;
  line-height: 8px;
  margin-top: 1px;
}

.canvas { grid-column: 2; margin-left: 5px; display: block; }
.bubble { font: 700 14px "Liberation Sans", sans-serif; fill: #bbb; text-anchor: middle; }
.bubble.dim { fill: #9a9a9a; }
.longbar { font: 12px "Noto Sans CJK SC", sans-serif; fill: #5a6a90; }
.stamp { font: 38px "Liberation Sans", sans-serif; fill: #fff; mix-blend-mode: difference; }
.axis-y { font: 15px "Liberation Sans", sans-serif; fill: #4fd14f; }

.props {
  position: absolute;
  left: 890px;
  top: 60px;
  box-sizing: border-box;
  width: 280px;
  height: 493px;
  padding: 0 1px;
  background: #fff;
  box-shadow: 2px 2px 6px rgba(0, 0, 0, 0.45), 0 -1px 3px rgba(0, 0, 0, 0.15);
}
.props-title {
  display: flex;
  align-items: center;
  justify-content: space-between;
  height: 31px;
  padding-left: 6px;
  color: #8a8a8a;
}
.props-close {
  width: 19px;
  height: 19px;
  background: #e6e6e6;
  color: #fff;
  text-align: center;
  line-height: 19px;
  font-size: 14px;
}
.grid {
  width: 277px;
  border-collapse: collapse;
  table-layout: fixed;
  border: 1px solid #bdbdbd;
}
.c-no { width: 20px; }
.c-name { width: 121px; }
.c-val { width: 105px; }
.c-add { width: 31px; }
.grid th {
  height: 22px;
  padding: 0;
  font-weight: 400;
  font-size: 12px;
  color: #222;
  background: linear-gradient(#fff, #ebebeb);
  border: 1px solid #c4c4c4;
}
.grid th.th-val { background: linear-gradient(#fbe3b0, #efb95e); color: #8b0030; }
.grid td {
  height: 18px;
  padding: 0;
  border: 1px solid #c4c4c4;
  white-space: pre;
  overflow: hidden;
}
.idx {
  text-align: center;
  font: 11px "Liberation Mono", monospace;
  color: #333;
  background: linear-gradient(#f7f7f7, #e8e8e8);
}
.grid td.idx.sel { background: #fbd38c; color: #a0301a; }
.grid td.name { padding-left: 20px; color: #222; }
.grid td.name.blue { color: #0a14a8; }
.grid td.name.group { color: #8a8a8a; padding-left: 3px; }
.grid td.name.sel { background: #0078d7; color: #fff; }
.unit { font: 9.500px "Liberation Mono", monospace; }
.plus {
  display: inline-block;
  box-sizing: border-box;
  width: 12px;
  height: 12px;
  margin-right: 5px;
  border: 1px solid #bbb;
  color: #333;
  font: 11px/10px "Liberation Sans", sans-serif;
  text-align: center;
  vertical-align: -1px;
}
.grid td.val { padding-left: 1px; font: 11px "Liberation Mono", monospace; letter-spacing: -0.600px; color: #222; }
.grid td.val.cn { font: 12px "Noto Sans CJK SC", sans-serif; letter-spacing: 0; }
.grid td.val.sel { background: #d8e8f6; }
.add { text-align: center; line-height: 0; }
.check {
  display: inline-block;
  box-sizing: border-box;
  width: 13px;
  height: 13px;
  border: 1px solid #444;
  background: #fff;
}
</style>
